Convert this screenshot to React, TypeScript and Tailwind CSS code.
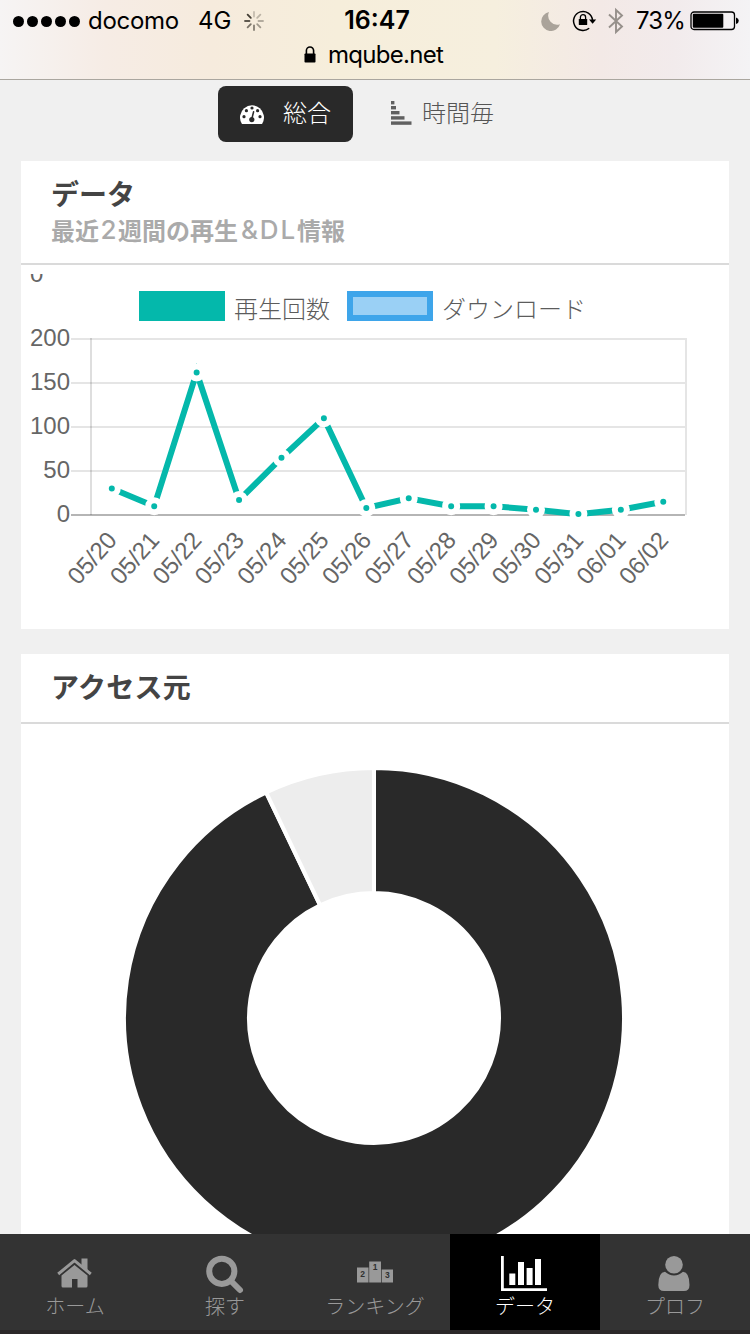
import type { ReactNode } from "react";
import clsx from "clsx";

const PLAYS = [
  { date: "05/20", count: 30 },
  { date: "05/21", count: 10 },
  { date: "05/22", count: 162 },
  { date: "05/23", count: 17 },
  { date: "05/24", count: 65 },
  { date: "05/25", count: 110 },
  { date: "05/26", count: 8 },
  { date: "05/27", count: 19 },
  { date: "05/28", count: 10 },
  { date: "05/29", count: 10 },
  { date: "05/30", count: 6 },
  { date: "05/31", count: 1 },
  { date: "06/01", count: 6 },
  { date: "06/02", count: 15 },
];

const TICKS = [200, 150, 100, 50, 0];

const CHART = { left: 70, right: 664, base: 250, perUnit: 0.88 };

const toX = (i: number) => CHART.left + 20.8 + i * 42.42;
const toY = (v: number) => CHART.base - v * CHART.perUnit;

function Spinner() {
  const shades = [0.25, 0.3, 0.35, 0.45, 0.6, 0.65, 0.8, 0.95];
  return (
    <svg width="20" height="20" viewBox="-10 -10 20 20" aria-hidden="true">
      {shades.map((o, i) => (
        <line
          key={i}
          y1={-4.5}
          y2={-9}
          stroke="#3a352c"
          strokeWidth={1.8}
          strokeLinecap="round"
          opacity={o}
          transform={`rotate(${i * 45})`}
        />
      ))}
    </svg>
  );
}

function StatusBar() {
  return (
    <header className="h-20 shrink-0 border-b border-[#aaa69f] bg-[linear-gradient(90deg,#f6f4f4_0%,#f6ece5_14%,#f6ebdd_28%,#f6eedb_45%,#f6efde_66%,#f3e9e6_80%,#f2ebec_90%,#f4f3f5_100%)] font-['Inter','Liberation_Sans',sans-serif] text-[24px] text-black">
      <div className="grid h-[42px] grid-cols-[344px_66px_1fr] items-center">
        <div className="flex items-center pl-[13px]">
          <div className="flex gap-[3px]">
            {[0, 1, 2, 3, 4].map((i) => (
              <span key={i} className="size-[11px] rounded-full bg-black" />
            ))}
          </div>
          <span className="ml-2 w-[110px] tracking-[-0.3px]">docomo</span>
          <span className="w-[46px]">4G</span>
          <Spinner />
        </div>
        <span className="text-center text-[25px] font-semibold whitespace-nowrap">16:47</span>
        <div className="flex items-center pl-[131px]">
          <svg width="20" height="20" viewBox="0 0 20 20" className="shrink-0" aria-hidden="true">
            <path d="M8 1A9.6 9.6 0 1 0 19 13.2A9 9 0 0 1 8 1Z" fill="#aaa39a" />
          </svg>
          <svg width="26" height="22" viewBox="0 0 26 22" className="ml-[11px] shrink-0" aria-hidden="true">
            <path d="M17.2 18.2A9.5 9.5 0 1 1 20.5 10" fill="none" stroke="#000" strokeWidth="1.5" />
            <path d="M17 9.5h7.2l-3.6 4.2z" />
            <rect x="6.8" y="8.9" width="8.4" height="6.2" rx="0.6" />
            <path d="M8.4 9.2V7.2a2.6 2.6 0 0 1 5.2 0v2" fill="none" stroke="#000" strokeWidth="1.3" />
          </svg>
          <svg width="18" height="28" viewBox="0 0 18 28" className="ml-[9px] shrink-0" aria-hidden="true">
            <path d="M2 7.5L15 19.5L9 25V3L15 8.5L2 20.5" fill="none" stroke="#96908b" strokeWidth="1.9" />
          </svg>
          <span className="ml-[11px] w-[54px] tracking-[-0.9px]">73%</span>
          <svg width="50" height="20" viewBox="0 0 50 20" className="shrink-0" aria-hidden="true">
            <rect x="1" y="1" width="43.5" height="17.5" rx="3" fill="none" stroke="#000" strokeWidth="1.3" />
            <rect x="2.8" y="2.8" width="30.5" height="14" rx="1" />
            <path d="M46 6.5q2.8 .8 2.8 3.3t-2.8 3.3z" />
          </svg>
        </div>
      </div>
      <div className="flex h-[26px] items-center justify-center gap-3 pr-[3px]">
        <svg width="12" height="17" viewBox="0 0 12 17" className="-mt-0.5" aria-hidden="true">
          <rect x="0.5" y="7.5" width="11" height="9" rx="0.8" />
          <path d="M2.4 8V4.6a3.6 3.6 0 0 1 7.2 0V8" fill="none" stroke="#000" strokeWidth="1.6" />
        </svg>
        <span className="tracking-[-0.7px]">mqube.net</span>
      </div>
    </header>
  );
}

function GaugeIcon() {
  return (
    <svg width="24" height="20" viewBox="0 0 24 20" aria-hidden="true">
      <path d="M1.7 19.5A12 12 0 1 1 22.3 19.5Q22 20 21.4 20H2.6Q2 20 1.7 19.5Z" fill="#fff" />
      <g fill="#292929">
        <circle cx="4" cy="12.7" r="1.6" />
        <circle cx="6.4" cy="6.7" r="1.6" />
        <circle cx="12" cy="4" r="1.6" />
        <circle cx="17.6" cy="6.7" r="1.6" />
        <circle cx="20" cy="12.7" r="1.6" />
        <circle cx="11.8" cy="15.6" r="2.6" />
      </g>
      <path d="M11.8 15L13.6 7.8" stroke="#292929" strokeWidth="1.5" strokeLinecap="round" />
    </svg>
  );
}

function HourlyIcon() {
  return (
    <svg width="22" height="24" viewBox="0 0 22 24" className="-mt-0.5" fill="#606060" aria-hidden="true">
      <rect x="1" width="3.4" height="3.4" />
      <rect x="1" y="5" width="5" height="3.4" />
      <rect x="1" y="10" width="8.5" height="3.4" />
      <rect x="1" y="15.2" width="13.5" height="3.4" />
      <rect x="1" y="20.4" width="20.5" height="3.4" />
    </svg>
  );
}

function Legend() {
  return (
    <g fill="#5c5c5c" fontSize="24" fontWeight="300">
      <rect x="118" y="26" width="86" height="30" fill="#04b8ab" />
      <text x="213" y="52.5">再生回数</text>
      <rect x="329" y="29" width="80" height="24" fill="#9ad0f5" stroke="#3ea5ea" strokeWidth="6" />
      <text x="421" y="52.5">ダウンロード</text>
    </g>
  );
}

function PlaysChart() {
  const line = PLAYS.map((p, i) => `${toX(i)},${toY(p.count)}`).join(" ");

  return (
    <svg
      width="708"
      height="364"
      viewBox="0 0 708 364"
      className="block font-['Liberation_Sans','Noto_Sans_CJK_JP',sans-serif]"
    >
      <clipPath id="tick-clip">
        <rect y="9" width="60" height="12" />
      </clipPath>
      <text x="9" y="17" fontSize="24" fill="#666" clipPath="url(#tick-clip)">0</text>
      <Legend />

      {TICKS.map((t) => (
        <g key={t}>
          <line
            x1="50"
            x2={CHART.right}
            y1={toY(t)}
            y2={toY(t)}
            stroke={t === 0 ? "#b5b5b5" : "#e5e5e5"}
            strokeWidth="2"
          />
          <text x="49" y={toY(t) + 7} textAnchor="end" fontSize="24" fill="#666">
            {t}
          </text>
        </g>
      ))}
      <line x1="70" x2="70" y1="73" y2="250" stroke="#000" strokeOpacity="0.13" strokeWidth="2" />
      <line x1="665" x2="665" y1="73" y2="250" stroke="#e5e5e5" strokeWidth="2" />

      <polyline points={line} fill="none" stroke="#04b8ab" strokeWidth="6" />
      {PLAYS.map((p, i) => (
        <circle
          key={p.date}
          cx={toX(i)}
          cy={toY(p.count)}
          r="6"
          fill="#04b8ab"
          stroke="#fff"
          strokeWidth="6"
        />
      ))}

      {PLAYS.map((p, i) => (
        <text
          key={p.date}
          transform={`translate(${toX(i)} 270.5) rotate(-48.5)`}
          textAnchor="end"
          dy="0.35em"
          fontSize="24"
          fill="#666"
        >
          {p.date}
        </text>
      ))}
    </svg>
  );
}

const SOURCES = [
  { share: 0.929, color: "#292929" },
  { share: 0.071, color: "#ededed" },
];

function arcPath(from: number, to: number, outer: number, inner: number) {
  const at = (t: number, r: number) =>
    `${(r * Math.sin(t * 2 * Math.PI)).toFixed(2)} ${(-r * Math.cos(t * 2 * Math.PI)).toFixed(2)}`;
  const large = to - from > 0.5 ? 1 : 0;
  return `M${at(from, outer)}A${outer} ${outer} 0 ${large} 1 ${at(to, outer)}L${at(to, inner)}A${inner} ${inner} 0 ${large} 0 ${at(from, inner)}Z`;
}

function SourceDonut() {
  let start = 0;
  return (
    <svg width="708" height="560" viewBox="-353 -294 708 560" className="block">
      {SOURCES.map((s) => {
        const from = start;
        start += s.share;
        return (
          <path
            key={s.color}
            d={arcPath(from, start, 250, 125)}
            fill={s.color}
            stroke="#fff"
            strokeWidth="4"
          />
        );
      })}
    </svg>
  );
}

function HomeIcon() {
  return (
    <svg width="36" height="30" viewBox="0 0 36 30" fill="currentColor" aria-hidden="true">
      <path d="M17.5 7L30.5 17.5V28Q30.5 29.5 29 29.5H20.5V21H15V29.5H6Q4.5 29.5 4.5 28V17.5Z" />
      <path
        d="M1.2 16L17.5 2.6L33.8 16"
        fill="none"
        stroke="currentColor"
        strokeWidth="3"
        strokeLinejoin="round"
      />
      <path d="M24.5 0.5H30.5V12.5L24.5 8Z" />
    </svg>
  );
}

function SearchIcon() {
  return (
    <svg
      width="38"
      height="38"
      viewBox="0 0 38 38"
      fill="none"
      stroke="currentColor"
      strokeWidth="6"
      className="overflow-visible"
      aria-hidden="true"
    >
      <circle cx="15.8" cy="17.3" r="12.6" />
      <path d="M25 27L34 36" strokeLinecap="round" />
    </svg>
  );
}

function PodiumIcon() {
  return (
    <svg
      width="36"
      height="22"
      viewBox="0 0 36 22"
      className="-mt-0.5 font-['Liberation_Sans',sans-serif]"
      aria-hidden="true"
    >
      <g fill="currentColor">
        <rect y="6.5" width="11.5" height="15" />
        <rect x="12.2" y="0.5" width="11.8" height="21" />
        <rect x="24.7" y="8.5" width="11.3" height="13" />
      </g>
      <g fill="#303030" fontSize="8.5" fontWeight="700" textAnchor="middle">
        <text x="5.7" y="15.5">2</text>
        <text x="18" y="8.5">1</text>
        <text x="30.3" y="17">3</text>
      </g>
    </svg>
  );
}

function BarsIcon() {
  return (
    <svg width="48" height="35" viewBox="0 0 48 35" fill="currentColor" aria-hidden="true">
      <path d="M0 0H2.8V32.2H46V35H0Z" />
      <rect x="8.3" y="17.5" width="6" height="11.5" />
      <rect x="17" y="6" width="6" height="23" />
      <rect x="25.6" y="12" width="6" height="17" />
      <rect x="34" y="3" width="6" height="26" />
    </svg>
  );
}

function UserIcon() {
  return (
    <svg width="34" height="35" viewBox="0 0 34 35" fill="currentColor" aria-hidden="true">
      <circle cx="16" cy="8.8" r="8.8" />
      <path d="M7 15.8Q11 19.5 16 19.5T25 15.8Q31.5 16.5 31.5 29Q31.5 35 26 35H6Q0.3 35 0.3 29Q0.3 16.5 7 15.8Z" />
    </svg>
  );
}

type NavItemProps = { icon: ReactNode; label: string; active?: boolean };

function NavItem({ icon, label, active }: NavItemProps) {
  return (
    <button
      type="button"
      className={clsx(
        "flex h-24 flex-col items-center",
        active ? "bg-black text-white" : "bg-[#333] text-[#999]",
      )}
    >
      <span className="flex h-[58px] w-full items-end justify-center">
        <span className="grid h-[38px] place-items-center">{icon}</span>
      </span>
      <span className="text-[20px] leading-[27px] font-light">{label}</span>
    </button>
  );
}

export default function App() {
  return (
    <div className="flex h-[1334px] w-[750px] flex-col overflow-hidden bg-[#f0f0f0] font-['Noto_Sans_CJK_JP',sans-serif]">
      <StatusBar />

      <main className="min-h-0 flex-1 overflow-hidden px-[21px]">
        <div className="flex h-[81px] items-start pt-1.5 pl-[197px] text-[24px] font-light">
          <button
            type="button"
            className="flex h-14 w-[135px] items-center gap-[19px] rounded-lg bg-[#292929] pl-[22px] text-white"
          >
            <GaugeIcon />
            <span className="-mt-1 leading-[50px]">総合</span>
          </button>
          <button type="button" className="ml-[37px] flex h-14 items-center gap-2.5 text-[#555]">
            <HourlyIcon />
            <span className="-mt-1 leading-[50px]">時間毎</span>
          </button>
        </div>

        <section className="h-[468px] bg-white">
          <div className="h-[104px] border-b-2 border-[#dadada] px-[30px] pt-[13px]">
            <h2 className="text-[28px] leading-[38px] font-bold text-[#444]">データ</h2>
            <p className="flex items-center text-[24px] leading-9 font-bold text-[#aaa]">
              最近
              <span className="px-[1.5px] font-['Inter',sans-serif] text-[26px] font-medium">2</span>
              週間の再生
              <span className="pl-[3px] font-['Inter',sans-serif] text-[26px] font-medium tracking-[1.8px]">
                &amp;DL
              </span>
              情報
            </p>
          </div>
          <PlaysChart />
        </section>

        <section className="mt-[25px] bg-white">
          <h2 className="h-[70px] border-b-2 border-[#dadada] pl-[30px] text-[28px] leading-[65px] font-bold tracking-[0.3px] text-[#444]">
            アクセス元
          </h2>
          <SourceDonut />
        </section>
      </main>

      <nav className="grid h-[100px] shrink-0 grid-cols-5 border-b-4 border-[#2b2829]">
        <NavItem icon={<HomeIcon />} label="ホーム" />
        <NavItem icon={<SearchIcon />} label="探す" />
        <NavItem icon={<PodiumIcon />} label="ランキング" />
        <NavItem icon={<BarsIcon />} label="データ" active />
        <NavItem icon={<UserIcon />} label="プロフ" />
      </nav>
    </div>
  );
}
